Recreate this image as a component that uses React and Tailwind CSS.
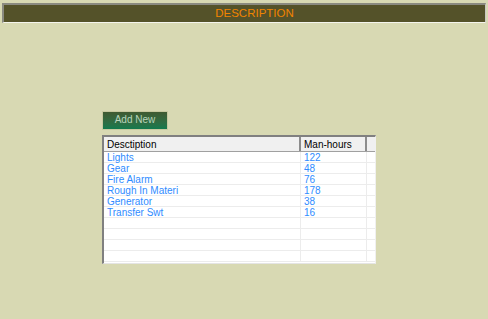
import React from "react";

const rows = [
  ["Lights", "122"],
  ["Gear", "48"],
  ["Fire Alarm", "76"],
  ["Rough In Materi", "178"],
  ["Generator", "38"],
  ["Transfer Swt", "16"],
  ["", ""],
  ["", ""],
  ["", ""],
  ["", ""],
];

const App = () => {
  return (
    <div className="w-[488px] h-[319px] bg-[#d8d9b3] pt-[3px] px-[2px] font-['Liberation_Sans',Arial,sans-serif]">
      {/* title bar */}
      <div className="h-[20px] bg-[#545229] border-t-2 border-l-2 border-[#8a8a80] border-b border-b-[#f4f4ec] border-r border-r-[#c8c8c0] flex items-center justify-center pl-[20px]">
        <span className="text-[11.5px] text-[#f08400] leading-none">DESCRIPTION</span>
      </div>

      <div className="pl-[100px] pt-[83px]">
        <button className="w-[66px] h-[19px] bg-gradient-to-b from-[#3f5a32] to-[#0f7a4e] text-[10px] text-[#b9d4bb] leading-none border border-[#c8c9a0]">
          Add New
        </button>

        {/* grid */}
        <div className="mt-[5px] w-[274px] h-[129px] bg-white border-t-2 border-l-2 border-[#808080] border-r border-b border-r-[#f0f0f0] border-b-[#e4e4e4] flex flex-col">
          <div className="flex h-[15px] bg-[#f0f0f0] border-b border-[#a0a0a0] text-[10px] text-black">
            <div className="w-[197px] pl-[3px] border-r-2 border-[#8c8c8c] flex items-center">Desctiption</div>
            <div className="w-[66px] pl-[3px] border-r-2 border-[#8c8c8c] flex items-center">Man-hours</div>
            <div className="flex-1" />
          </div>
          {rows.map((r, i) => (
            <div key={i} className="flex h-[11px] border-b border-[#ececec] text-[10px] text-[#2f8cff] leading-[11px]">
              <div className="w-[197px] pl-[3px] border-r border-[#ececec] whitespace-nowrap">{r[0]}</div>
              <div className="w-[66px] pl-[3px] border-r border-[#ececec]">{r[1]}</div>
              <div className="flex-1" />
            </div>
          ))}
        </div>
      </div>
    </div>
  );
};

export default App;
